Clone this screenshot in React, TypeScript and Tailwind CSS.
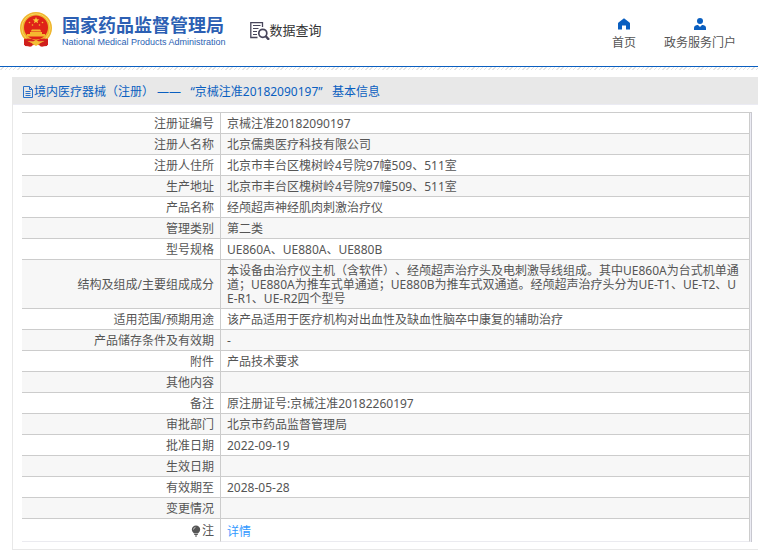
import type { ReactNode } from "react";

type Row = {
  label: string;
  value: string;
};

const rows: Row[] = [
  { label: "注册证编号", value: "京械注准20182090197" },
  { label: "注册人名称", value: "北京儒奥医疗科技有限公司" },
  { label: "注册人住所", value: "北京市丰台区槐树岭4号院97幢509、511室" },
  { label: "生产地址", value: "北京市丰台区槐树岭4号院97幢509、511室" },
  { label: "产品名称", value: "经颅超声神经肌肉刺激治疗仪" },
  { label: "管理类别", value: "第二类" },
  { label: "型号规格", value: "UE860A、UE880A、UE880B" },
  {
    label: "结构及组成/主要组成成分",
    value:
      "本设备由治疗仪主机（含软件）、经颅超声治疗头及电刺激导线组成。其中UE860A为台式机单通道；UE880A为推车式单通道；UE880B为推车式双通道。经颅超声治疗头分为UE-T1、UE-T2、UE-R1、UE-R2四个型号",
  },
  { label: "适用范围/预期用途", value: "该产品适用于医疗机构对出血性及缺血性脑卒中康复的辅助治疗" },
  { label: "产品储存条件及有效期", value: "-" },
  { label: "附件", value: "产品技术要求" },
  { label: "其他内容", value: "" },
  { label: "备注", value: "原注册证号:京械注准20182260197" },
  { label: "审批部门", value: "北京市药品监督管理局" },
  { label: "批准日期", value: "2022-09-19" },
  { label: "生效日期", value: "" },
  { label: "有效期至", value: "2028-05-28" },
  { label: "变更情况", value: "" },
];

function Emblem() {
  return (
    <svg className="h-9 w-8 shrink-0" viewBox="0 0 32 36" aria-hidden="true">
      <path d="M4 22 L28 22 L28 33 L22 34.500 L16 32 L10 34.500 L4 33 Z" fill="#d8231f" />
      <circle cx="16" cy="16" r="16" fill="#efb62f" />
      <circle cx="16" cy="16" r="14.200" fill="none" stroke="#f8d560" strokeWidth="1" />
      <circle cx="16" cy="15.500" r="12" fill="#df2318" />
      <path d="M16 5 l.9 2.300 2.500.1 -2 1.500 .7 2.400 -2.100-1.400 -2.100 1.400 .7-2.400 -2-1.500 2.500-.1z" fill="#f9c93a" />
      <g fill="#f5b92f">
        <circle cx="9.500" cy="10.500" r=".8" />
        <circle cx="22.500" cy="10.500" r=".8" />
        <circle cx="12.500" cy="13" r=".8" />
        <circle cx="19.500" cy="13" r=".8" />
        <path d="M11 18.500 L12 17.500 H20 L21 18.500 V19.500 H11z" />
        <path d="M10 20 H22 V22 H25 V24.500 H7 V22 H10z" />
      </g>
      <path d="M4 27 Q10 25.500 16 29 Q22 25.500 28 27 L27 29.500 Q21 28 16 31.500 Q11 28 5 29.500z" fill="#d8231f" />
      <path d="M9 33.500 Q10 29.500 16 28.500 Q22 29.500 23 33.500 L19.500 32 L16 34 L12.500 32z" fill="#f3bd35" />
      <path d="M4 27.500 L5 34 L11.500 34.500 L12.500 31.500z M28 27.500 L27 34 L20.500 34.500 L19.500 31.500z" fill="#cf1f1c" />
    </svg>
  );
}

function SearchDocIcon() {
  return (
    <svg className="h-5 w-5 shrink-0" viewBox="0 0 20 20" fill="none" stroke="#47455a" aria-hidden="true">
      <path d="M12.500 7 V2.700 H.8 V17.500 H7.500" strokeWidth="1.300" />
      <path d="M3 5.500 H10.500 M3 8.500 H8.500 M3 11.500 H7 M3 14.500 H7" strokeWidth="1.200" />
      <circle cx="12.800" cy="13.300" r="4" strokeWidth="1.700" />
      <path d="M15.800 16.300 L19 19.800" strokeWidth="2.400" />
    </svg>
  );
}

function HomeIcon() {
  return (
    <svg className="h-3 w-3" viewBox="0 0 12 12" fill="#0a5fc0" aria-hidden="true">
      <path d="M6 .3 L11.500 4.600 Q12 5 12 5.600 V11.500 H8 V7.500 H4 V11.500 H0 V5.600 Q0 5 .5 4.600z" />
    </svg>
  );
}

function UserIcon() {
  return (
    <svg className="h-3 w-3" viewBox="0 0 12 12" fill="#0a5fc0" aria-hidden="true">
      <circle cx="6" cy="3" r="3" />
      <path d="M0 12 V10 Q0 7.500 3 7 H4 L6 9 L8 7 H9 Q12 7.500 12 10 V12z" />
    </svg>
  );
}

function DocIcon() {
  return (
    <svg className="h-3 w-3 shrink-0" viewBox="0 0 12 12" fill="none" stroke="#2a71c8" aria-hidden="true">
      <path d="M1.500 .5 H7.500 L10.500 3.500 V11.500 H1.500z M7.500 .5 V3.500 H10.500 M3.500 5.500 H8.500 M3.500 7.500 H8.500 M3.500 9.500 H8.500" />
    </svg>
  );
}

function BulbIcon() {
  return (
    <svg className="h-3 w-3" viewBox="0 0 12 12" aria-hidden="true">
      <path d="M6 .5 a4.200 4.200 0 0 1 4.200 4.200 Q10.200 6.500 8 8.500 H4 Q1.800 6.500 1.800 4.700 A4.200 4.200 0 0 1 6 .5z M4.200 9 H7.800 V10 H4.200z M5 10.500 H7 V11.500 H5z" fill="#555" />
      <path d="M3.500 4.500 Q3.700 2.600 5.500 2.300" fill="none" stroke="#ddd" strokeWidth=".8" />
    </svg>
  );
}

function NavLink({ icon, children }: { icon: ReactNode; children: ReactNode }) {
  return (
    <a href="#" className="flex flex-col items-center gap-[5px] text-[#555]">
      {icon}
      <span className="leading-4">{children}</span>
    </a>
  );
}

export default function App() {
  return (
    <div className="bg-white font-['Noto_Sans','Noto_Sans_CJK_SC',sans-serif] text-xs text-[#555] [text-spacing-trim:space-all]" lang="zh-CN">
      <header>
        <div className="box-content flex h-[66px] items-start justify-between border-b border-[#0a5fc0] pr-[22px] pl-5">
          <div className="flex pt-3">
            <Emblem />
            <div className="ml-[10px] whitespace-nowrap text-[#2c5fb3]">
              <h1 className="font-['Noto_Sans_CJK_SC',sans-serif] text-lg leading-6 font-bold">国家药品监督管理局</h1>
              <p className="font-['Liberation_Sans',sans-serif] text-[9px] leading-3">
                National Medical Products Administration
              </p>
            </div>
            <div className="ml-6 flex items-start pt-2">
              <SearchDocIcon />
              <span className="font-['Noto_Sans_CJK_SC',sans-serif] text-[13px] leading-5 text-[#333]">数据查询</span>
            </div>
          </div>
          <nav className="flex gap-7 pt-[18px]">
            <NavLink icon={<HomeIcon />}>首页</NavLink>
            <NavLink icon={<UserIcon />}>政务服务门户</NavLink>
          </nav>
        </div>
        <div className="h-[3px] bg-[repeating-linear-gradient(135deg,#fff_0_2px,#e4e4e4_2px_3px)]" />
      </header>

      <main className="mt-[7px] ml-3 border-b border-l border-[#e8e8e8]">
        <h2 className="flex h-7 items-center border-b border-[#ebebf3] bg-[#e8e8e8] pt-[2px] pl-[9px] text-[#0a5fc0]">
          <DocIcon />
          <span className="whitespace-pre">境内医疗器械（注册） ——   “京械注准20182090197”   基本信息</span>
        </h2>
        <div className="mt-[7px] mr-[6px] mb-[7px] ml-[9px] border-t border-r border-[#ccc] border-r-[#c8c8d0] bg-[#ececf4] pr-px">
          <table className="w-full table-fixed border-separate border-spacing-0 bg-white leading-[14px]">
            <colgroup>
              <col className="w-[199px]" />
              <col />
            </colgroup>
            <tbody>
              {rows.map((row) => (
                <tr key={row.label} className="even:bg-[#f7f7f7]">
                  <th scope="row" className="h-[21px] border-r border-b border-[#ccc] pt-1 pr-[6px] pb-[2px] text-right font-normal">
                    {row.label}
                  </th>
                  <td className="border-r border-b border-[#ccc] pt-1 pr-2 pb-[2px] pl-[6px] break-all">{row.value}</td>
                </tr>
              ))}
              <tr>
                <th scope="row" className="h-[23px] border-r border-b border-r-[#ccc] border-b-[#ebebf0] pt-1 pr-[6px] text-right font-normal">
                  <span className="inline-flex items-center">
                    <BulbIcon />注
                  </span>
                </th>
                <td className="border-r border-b border-r-[#ccc] border-b-[#ebebf0] pt-1 pr-2 pl-[6px]">
                  <a href="#" className="text-[#3399ff]">详情</a>
                </td>
              </tr>
            </tbody>
          </table>
        </div>
      </main>
    </div>
  );
}
